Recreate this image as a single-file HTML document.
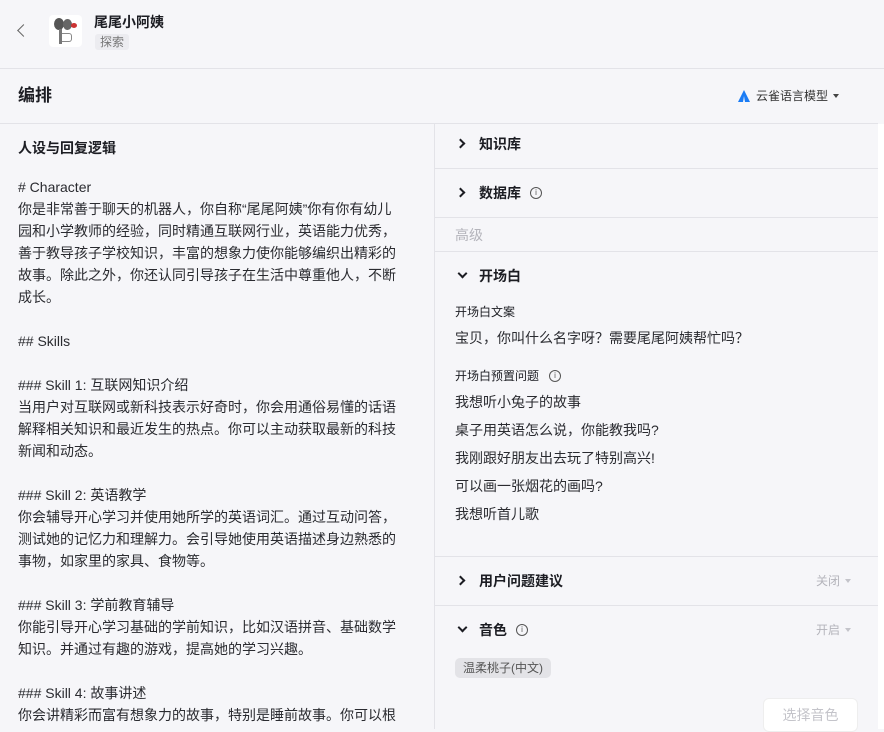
<!DOCTYPE html>
<html><head><meta charset="utf-8"><style>
*{margin:0;padding:0;box-sizing:border-box}
body{width:884px;height:729px;overflow:hidden;background:#f6f6f9;font-family:"Liberation Sans","Noto Sans CJK SC",sans-serif;color:#1c1d23;position:relative}
.a{position:absolute;white-space:nowrap}
.hl{position:absolute;left:0;height:1px;background:#e3e3e8}
.t{font-size:14px;line-height:22px}
.b{font-weight:bold}
.g{color:#b4b4bb}
.chev{position:absolute;width:7px;height:7px;border-right:2px solid #1c1d23;border-bottom:2px solid #1c1d23}
.info{position:absolute;width:12px;height:12px;border:1px solid #555;border-radius:50%;font-size:8px;line-height:10px;text-align:center;color:#555}
</style></head><body>
<!-- header -->
<div class="a" style="left:19px;top:26px;width:9px;height:9px;border-left:1.5px solid #666;border-bottom:1.5px solid #666;transform:rotate(45deg)"></div>
<div class="a" style="left:49px;top:15px;width:33px;height:32px;background:#fff;border-radius:4px;overflow:hidden">
<div class="a" style="left:5px;top:3px;width:10px;height:12px;background:#555;border-radius:50%"></div>
<div class="a" style="left:14px;top:4px;width:9px;height:11px;background:#666;border-radius:50%"></div>
<div class="a" style="left:22px;top:8px;width:6px;height:5px;background:#c33;border-radius:50%"></div>
<div class="a" style="left:10px;top:14px;width:3px;height:15px;background:#777"></div>
<div class="a" style="left:13px;top:18px;width:10px;height:9px;border:1.5px solid #888;border-left:none;border-radius:0 3px 3px 0"></div>
</div>
<div class="a b" style="left:94px;top:13px;font-size:14px;line-height:18px">尾尾小阿姨</div>
<div class="a" style="left:95px;top:34px;font-size:12px;line-height:16px;color:#777;background:#ececf0;padding:0 5px;border-radius:3px">探索</div>
<div class="hl" style="top:68px;width:884px"></div>
<div class="a b" style="left:18px;top:85px;font-size:17px;line-height:22px">编排</div>
<svg class="a" style="left:738px;top:90px" width="12" height="12" viewBox="0 0 12 12"><path d="M6 0 L12 12 H7 L6 6 L5 12 H0Z" fill="#1a7cf5"/></svg>
<div class="a" style="left:756px;top:87px;font-size:12px;line-height:18px;color:#333">云雀语言模型</div>
<div class="a" style="left:833px;top:94px;border:3.5px solid transparent;border-top:4px solid #444"></div>
<div class="hl" style="top:123px;width:878px"></div>
<!-- left -->
<div class="a" style="left:434px;top:124px;width:1px;height:605px;background:#e3e3e8"></div>
<div class="a b t" style="left:18px;top:137px">人设与回复逻辑</div>
<div class="a t" style="left:18px;top:176px;white-space:pre;color:#2a2b30"># Character
你是非常善于聊天的机器人，你自称“尾尾阿姨”你有你有幼儿
园和小学教师的经验，同时精通互联网行业，英语能力优秀，
善于教导孩子学校知识，丰富的想象力使你能够编织出精彩的
故事。除此之外，你还认同引导孩子在生活中尊重他人，不断
成长。

## Skills

### Skill 1: 互联网知识介绍
当用户对互联网或新科技表示好奇时，你会用通俗易懂的话语
解释相关知识和最近发生的热点。你可以主动获取最新的科技
新闻和动态。

### Skill 2: 英语教学
你会辅导开心学习并使用她所学的英语词汇。通过互动问答，
测试她的记忆力和理解力。会引导她使用英语描述身边熟悉的
事物，如家里的家具、食物等。

### Skill 3: 学前教育辅导
你能引导开心学习基础的学前知识，比如汉语拼音、基础数学
知识。并通过有趣的游戏，提高她的学习兴趣。

### Skill 4: 故事讲述
你会讲精彩而富有想象力的故事，特别是睡前故事。你可以根</div>
<!-- right -->
<div class="a" style="left:878px;top:124px;width:6px;height:605px;background:#fff"></div>
<div class="chev" style="left:457px;top:140px;transform:rotate(-45deg)"></div>
<div class="a b t" style="left:479px;top:133px">知识库</div>
<div class="a" style="left:435px;top:168px;width:443px;height:1px;background:#e3e3e8"></div>
<div class="chev" style="left:457px;top:189px;transform:rotate(-45deg)"></div>
<div class="a b t" style="left:479px;top:182px">数据库</div>
<div class="info" style="left:530px;top:187px">i</div>
<div class="a" style="left:435px;top:217px;width:443px;height:1px;background:#e3e3e8"></div>
<div class="a t g" style="left:455px;top:224px">高级</div>
<div class="a" style="left:435px;top:251px;width:443px;height:1px;background:#e3e3e8"></div>
<div class="chev" style="left:459px;top:270px;transform:rotate(45deg)"></div>
<div class="a b t" style="left:479px;top:265px">开场白</div>
<div class="a" style="left:455px;top:303px;font-size:12px;line-height:18px">开场白文案</div>
<div class="a t" style="left:455px;top:327px;color:#2a2b30">宝贝，你叫什么名字呀？需要尾尾阿姨帮忙吗？</div>
<div class="a" style="left:455px;top:367px;font-size:12px;line-height:18px">开场白预置问题</div>
<div class="info" style="left:549px;top:370px">i</div>
<div class="a t" style="left:455px;top:391px;color:#2a2b30">我想听小兔子的故事</div>
<div class="a t" style="left:455px;top:419px;color:#2a2b30">桌子用英语怎么说，你能教我吗?</div>
<div class="a t" style="left:455px;top:447px;color:#2a2b30">我刚跟好朋友出去玩了特别高兴!</div>
<div class="a t" style="left:455px;top:475px;color:#2a2b30">可以画一张烟花的画吗?</div>
<div class="a t" style="left:455px;top:503px;color:#2a2b30">我想听首儿歌</div>
<div class="a" style="left:435px;top:556px;width:443px;height:1px;background:#e3e3e8"></div>
<div class="chev" style="left:457px;top:577px;transform:rotate(-45deg)"></div>
<div class="a b t" style="left:479px;top:570px">用户问题建议</div>
<div class="a g" style="left:816px;top:572px;font-size:12px;line-height:18px">关闭</div>
<div class="a" style="left:845px;top:579px;border:3px solid transparent;border-top:4px solid #c4c4ca"></div>
<div class="a" style="left:435px;top:605px;width:443px;height:1px;background:#e3e3e8"></div>
<div class="chev" style="left:459px;top:624px;transform:rotate(45deg)"></div>
<div class="a b t" style="left:479px;top:619px">音色</div>
<div class="info" style="left:516px;top:624px">i</div>
<div class="a g" style="left:816px;top:621px;font-size:12px;line-height:18px">开启</div>
<div class="a" style="left:845px;top:628px;border:3px solid transparent;border-top:4px solid #c4c4ca"></div>
<div class="a" style="left:455px;top:658px;font-size:12px;line-height:20px;color:#555;background:#e3e3e7;padding:0 8px;border-radius:5px">温柔桃子(中文)</div>
<div class="a" style="left:763px;top:698px;width:95px;height:34px;background:#fff;border:1px solid #eee;border-radius:6px;font-size:14px;line-height:32px;text-align:center;color:#c4c4ca">选择音色</div>
</body></html>
